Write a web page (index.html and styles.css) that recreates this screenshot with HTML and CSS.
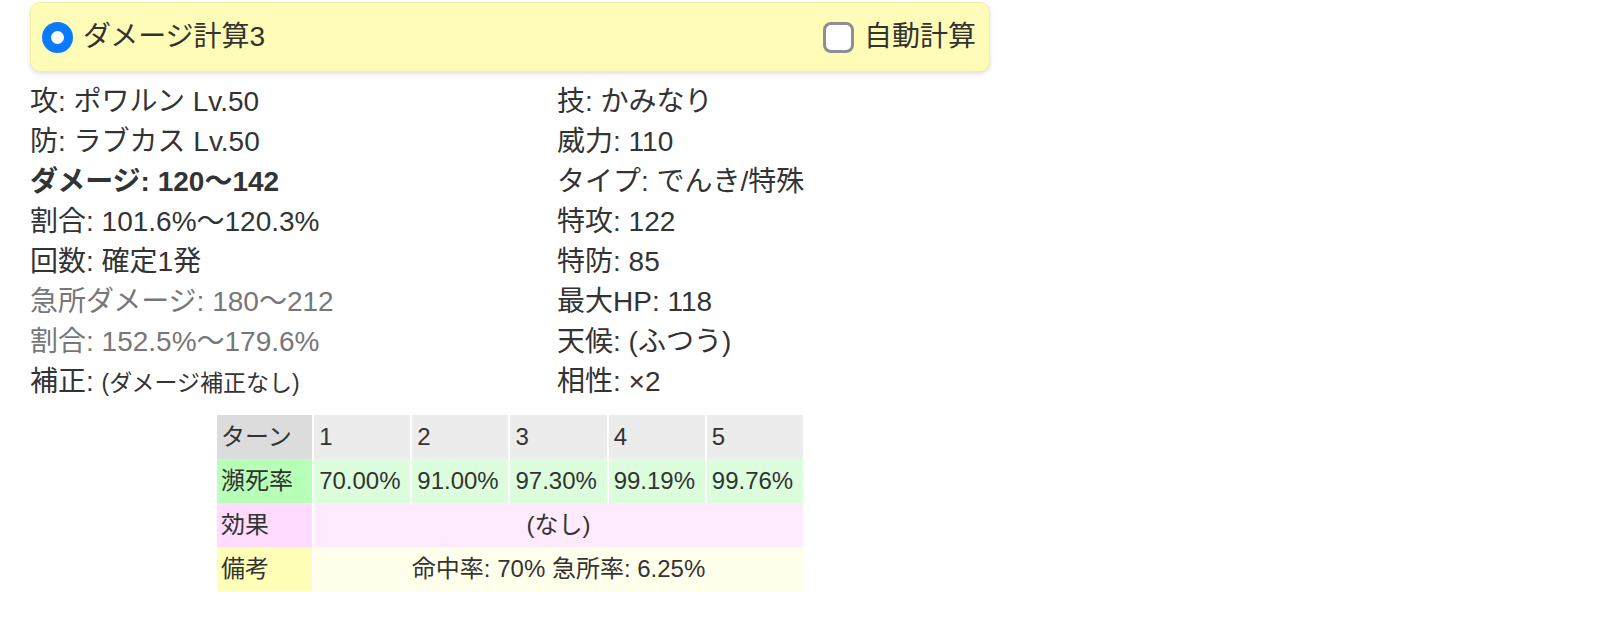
FILE: index.html
```html
<!DOCTYPE html>
<html lang="ja">
<head>
  <meta charset="UTF-8" />
  <title>ダメージ計算</title>
  <link rel="stylesheet" href="styles.css">
</head>
<body>
  <div class="calc">
    <div class="calc-head">
      <label class="pick">
        <span class="radio"></span>
        <span>ダメージ計算3</span>
      </label>
      <label class="pick">
        <span class="check"></span>
        <span>自動計算</span>
      </label>
    </div>

    <div class="result">
      <div class="col">
        <div>攻: ポワルン Lv.50</div>
        <div>防: ラブカス Lv.50</div>
        <div class="strong">ダメージ: 120〜142</div>
        <div>割合: 101.6%〜120.3%</div>
        <div>回数: 確定1発</div>
        <div class="muted">急所ダメージ: 180〜212</div>
        <div class="muted">割合: 152.5%〜179.6%</div>
        <div>補正: <small>(ダメージ補正なし)</small></div>
      </div>
      <div class="col">
        <div>技: かみなり</div>
        <div>威力: 110</div>
        <div>タイプ: でんき/特殊</div>
        <div>特攻: 122</div>
        <div>特防: 85</div>
        <div>最大HP: 118</div>
        <div>天候: (ふつう)</div>
        <div>相性: ×2</div>
      </div>
    </div>

    <!-- turn table -->
    <table class="turns">
      <tr class="row-turn">
        <th>ターン</th>
        <td>1</td><td>2</td><td>3</td><td>4</td><td>5</td>
      </tr>
      <tr class="row-ko">
        <th>瀕死率</th>
        <td>70.00%</td><td>91.00%</td><td>97.30%</td><td>99.19%</td><td>99.76%</td>
      </tr>
      <tr class="row-effect">
        <th>効果</th>
        <td colspan="5" class="center">(なし)</td>
      </tr>
      <tr class="row-note">
        <th>備考</th>
        <td colspan="5" class="center">命中率: 70% 急所率: 6.25%</td>
      </tr>
    </table>
  </div>
</body>
</html>
```

FILE: styles.css
```css
body {
  margin: 0;
  padding: 2px 0 0 30px;
  background: #fff;
  color: #333;
  font-family: "Liberation Sans", "Noto Sans CJK JP", sans-serif;
  font-size: 28px;
  line-height: 40px;
}

.calc {
  width: 960px;
}

.calc-head {
  display: flex;
  justify-content: space-between;
  align-items: center;
  height: 70px;
  box-sizing: border-box;
  padding: 0 13px 0 11px;
  background: #fffcb8;
  border: 1px solid #f4efa6;
  border-radius: 10px;
  box-shadow: 0 2px 4px rgba(0, 0, 0, 0.12);
}

.pick {
  display: flex;
  align-items: center;
  gap: 10px;
}

.radio {
  width: 31px;
  height: 31px;
  border-radius: 50%;
  background: #0a7bff;
  display: flex;
  align-items: center;
  justify-content: center;
}

.radio::after {
  content: "";
  width: 13px;
  height: 13px;
  border-radius: 50%;
  background: #fff;
}

.check {
  width: 31px;
  height: 31px;
  box-sizing: border-box;
  border: 3px solid #8e8e93;
  border-radius: 8px;
  background: #fff;
}

.result {
  display: grid;
  grid-template-columns: 527px 1fr;
  margin-top: 10px;
  width: 1100px;
}

.strong {
  font-weight: bold;
}

.muted {
  color: #777;
}

small {
  font-size: 23px;
}

.turns {
  margin: 12px auto 0;
  border-collapse: separate;
  border-spacing: 0;
  table-layout: fixed;
  width: 586px;
  font-size: 24px;
}

.turns th,
.turns td {
  height: 44px;
  padding: 0 5px;
  box-sizing: border-box;
  text-align: left;
  font-weight: normal;
  white-space: nowrap;
}

.turns th {
  width: 95px;
  padding-left: 4px;
}

.turns td {
  width: 98px;
  border-left: 2px solid #fff;
}

.turns td.center {
  text-align: center;
}

.row-turn th { background: #dcdcdc; }
.row-turn td { background: #ececec; }
.row-ko th { background: #b8ffb8; }
.row-ko td { background: #dcfedc; }
.row-effect th { background: #ffdcff; }
.row-effect td { background: #ffeafe; }
.row-note th { background: #ffffb8; }
.row-note td { background: #ffffec; }
```
